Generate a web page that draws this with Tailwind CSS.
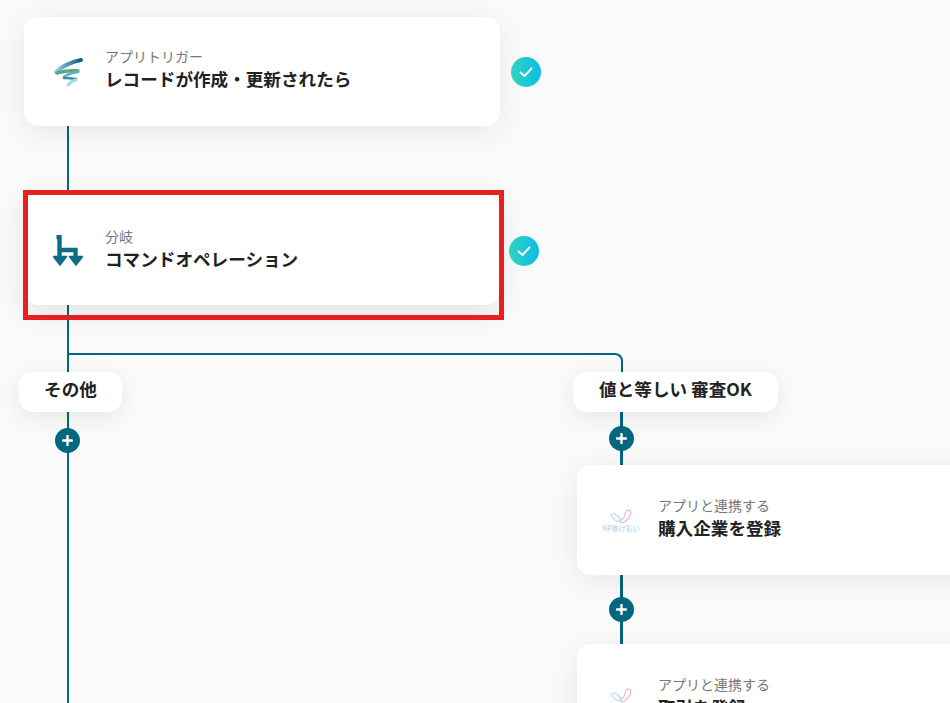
<!DOCTYPE html>
<html lang="ja">

<head>
  <meta charset="UTF-8">
  <meta name="viewport" content="width=device-width, initial-scale=1.0">
  <title>フロー</title>
  <script src="https://cdn.jsdelivr.net/npm/@tailwindcss/browser@4"></script>
</head>

<body class="bg-[#fafafa] font-['Noto_Sans_CJK_JP','Noto_Sans',sans-serif] text-[#222222]">

  <!-- flow canvas -->
  <div class="relative w-[950px] h-[703px] overflow-hidden">

    <!-- connector lines -->
    <div class="absolute left-[67px] top-[120px] w-[2px] h-[583px] bg-[#04667f]"></div>
    <div class="absolute left-[68px] top-[353px] w-[555px] h-[30px] border-t-2 border-r-2 border-[#04667f] rounded-tr-[8px]"></div>
    <div class="absolute left-[620px] top-[380px] w-[3px] h-[270px] bg-[#04667f]"></div>

    <!-- trigger -->
    <div class="absolute left-[24px] top-[17px] w-[476px] h-[109px] bg-white rounded-[14px] shadow-[0_6px_30px_rgba(0,0,0,0.08)] flex items-center">
      <div class="w-[81px] flex justify-center pl-[7px]">
        <svg width="32" height="30" viewBox="0 0 32 30" fill="none">
          <defs>
            <linearGradient id="swoosh" x1="29" y1="3" x2="4" y2="15" gradientUnits="userSpaceOnUse">
              <stop offset="0" stop-color="#165f7e" />
              <stop offset="1" stop-color="#8fd0ee" />
            </linearGradient>
          </defs>
          <path d="M29 3 Q14 6 4 15" stroke="url(#swoosh)" stroke-width="4" stroke-linecap="round" />
          <path d="M5 16 Q16 13 26 14" stroke="#5bab74" stroke-width="3.4" stroke-linecap="round" />
          <path d="M26 15 Q17 16 12 20" stroke="#5cb0d6" stroke-width="2.6" stroke-linecap="round" />
          <path d="M12 21 Q18 21 24 22" stroke="#3a8fa8" stroke-width="2.6" stroke-linecap="round" />
          <path d="M24 23 Q19 24 16 28" stroke="#a4daf0" stroke-width="3" stroke-linecap="round" />
        </svg>
      </div>
      <div class="-mt-[4px]">
        <p class="text-[14px] leading-[19px] text-[#777777]">アプリトリガー</p>
        <p class="text-[17.6px] leading-[26px] font-bold">レコードが作成・更新されたら</p>
      </div>
    </div>
    <div class="absolute left-[511px] top-[57px] w-[30px] h-[30px] rounded-full bg-gradient-to-r from-[#2dd4bf] to-[#0ebce9] flex items-center justify-center">
      <svg width="16" height="16" viewBox="0 0 16 16" fill="none">
        <path d="M2.5 8.5 L6.5 12 L13.5 4.5" stroke="white" stroke-width="1.9" stroke-linecap="round" stroke-linejoin="round" />
      </svg>
    </div>

    <!-- branch, with the red highlight drawn over it -->
    <div class="absolute left-[24px] top-[195px] w-[475px] h-[110px] bg-white rounded-[14px] shadow-[0_6px_30px_rgba(0,0,0,0.1)] flex items-center">
      <div class="w-[81px] flex justify-center pl-[7px]">
        <svg width="30" height="31" viewBox="0 0 30 31" fill="none">
          <path d="M3.5 2 H6.5 V24 M6.5 15 H22.5 V24" stroke="#0d6d88" stroke-width="4.4" />
          <path d="M0.5 21.5 H13.5 L7 30 Z M16.5 21.5 H29.5 L23 30 Z" fill="#0d6d88" stroke="#0d6d88" stroke-width="1.6" stroke-linejoin="round" />
        </svg>
      </div>
      <div class="-mt-[2px]">
        <p class="text-[14px] leading-[19px] text-[#777777]">分岐</p>
        <p class="text-[17.6px] leading-[26px] font-bold">コマンドオペレーション</p>
      </div>
    </div>
    <div class="absolute left-[23px] top-[190px] w-[481px] h-[130px] border-[5px] border-[#e62020]"></div>
    <div class="absolute left-[509px] top-[236px] w-[30px] h-[30px] rounded-full bg-gradient-to-r from-[#2dd4bf] to-[#0ebce9] flex items-center justify-center">
      <svg width="16" height="16" viewBox="0 0 16 16" fill="none">
        <path d="M2.5 8.5 L6.5 12 L13.5 4.5" stroke="white" stroke-width="1.9" stroke-linecap="round" stroke-linejoin="round" />
      </svg>
    </div>

    <!-- branch labels -->
    <div class="absolute left-[19px] top-[372px] w-[103px] h-[40px] pb-[5px] bg-white rounded-[14px] shadow-[0_6px_24px_rgba(0,0,0,0.08)] flex items-center justify-center text-[17.6px] font-bold">その他</div>
    <div class="absolute left-[573px] top-[372px] w-[205px] h-[40px] pb-[5px] bg-white rounded-[14px] shadow-[0_6px_24px_rgba(0,0,0,0.08)] flex items-center justify-center text-[17.6px] font-bold whitespace-nowrap">値と等しい 審査OK</div>

    <!-- add buttons -->
    <div class="absolute left-[55px] top-[428px] w-[25px] h-[25px] rounded-full bg-[#04667f] flex items-center justify-center">
      <svg width="11" height="11" viewBox="0 0 11 11"><path d="M5.5 1 V10 M1 5.5 H10" stroke="white" stroke-width="2.4" stroke-linecap="round" /></svg>
    </div>
    <div class="absolute left-[609px] top-[426px] w-[25px] h-[25px] rounded-full bg-[#04667f] flex items-center justify-center">
      <svg width="11" height="11" viewBox="0 0 11 11"><path d="M5.5 1 V10 M1 5.5 H10" stroke="white" stroke-width="2.4" stroke-linecap="round" /></svg>
    </div>
    <div class="absolute left-[609px] top-[597px] w-[25px] h-[25px] rounded-full bg-[#04667f] flex items-center justify-center">
      <svg width="11" height="11" viewBox="0 0 11 11"><path d="M5.5 1 V10 M1 5.5 H10" stroke="white" stroke-width="2.4" stroke-linecap="round" /></svg>
    </div>

    <!-- app steps -->
    <div class="absolute left-[577px] top-[465px] w-[476px] h-[110px] bg-white rounded-[14px] shadow-[0_6px_30px_rgba(0,0,0,0.08)] flex items-center">
      <div class="w-[81px] flex flex-col items-center pl-[7px] pt-[2px]">
        <svg width="22" height="15" viewBox="0 0 22 15" fill="none">
          <path d="M1 6 Q3 3 8 7 Q12 11 11 13 Q5 13 1 6 Z" stroke="#b4d8f2" stroke-width="1.1" />
          <path d="M9 12 Q14 11 15 5 Q16 1 19 1 Q22 2 20 7 Q17 13 11 14" stroke="#eab6d3" stroke-width="1.2" />
        </svg>
        <span class="text-[7px] leading-[9px] text-[#a9cdea] whitespace-nowrap">NP掛け払い</span>
      </div>
      <div class="-mt-[4px]">
        <p class="text-[14px] leading-[19px] text-[#777777]">アプリと連携する</p>
        <p class="text-[17.6px] leading-[26px] font-bold">購入企業を登録</p>
      </div>
    </div>

    <div class="absolute left-[577px] top-[644px] w-[476px] h-[110px] bg-white rounded-[14px] shadow-[0_6px_30px_rgba(0,0,0,0.08)] flex items-center">
      <div class="w-[81px] flex flex-col items-center pl-[7px] pt-[2px]">
        <svg width="22" height="15" viewBox="0 0 22 15" fill="none">
          <path d="M1 6 Q3 3 8 7 Q12 11 11 13 Q5 13 1 6 Z" stroke="#b4d8f2" stroke-width="1.1" />
          <path d="M9 12 Q14 11 15 5 Q16 1 19 1 Q22 2 20 7 Q17 13 11 14" stroke="#eab6d3" stroke-width="1.2" />
        </svg>
        <span class="text-[7px] leading-[9px] text-[#a9cdea] whitespace-nowrap">NP掛け払い</span>
      </div>
      <div class="-mt-[4px]">
        <p class="text-[14px] leading-[19px] text-[#777777]">アプリと連携する</p>
        <p class="text-[17.6px] leading-[26px] font-bold">取引を登録</p>
      </div>
    </div>

  </div>

</body>

</html>
